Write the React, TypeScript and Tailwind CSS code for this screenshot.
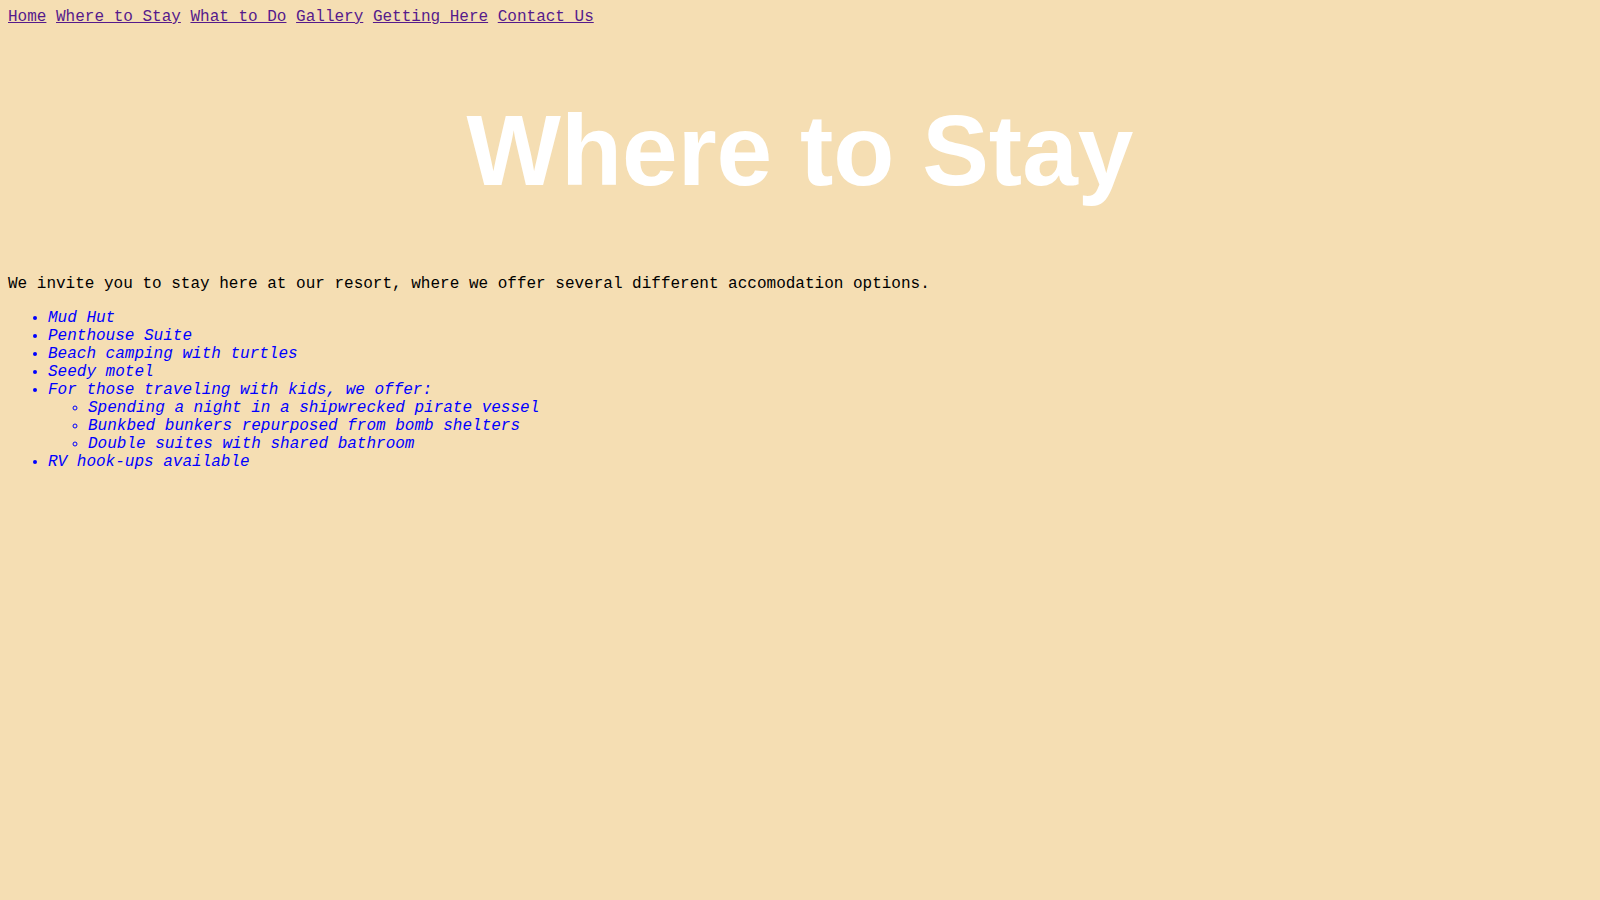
export default function App() {
  const links = ["Home", "Where to Stay", "What to Do", "Gallery", "Getting Here", "Contact Us"];
  return (
    <div
      className="min-h-screen bg-[#f5deb3] p-2 text-[16px] leading-[normal] text-black"
      style={{ fontFamily: '"Liberation Mono", "Courier New", monospace' }}
    >
      <div>
        {links.map((l, i) => (
          <span key={l}>
            <a href="#" className="text-[#551a8b] underline">
              {l}
            </a>
            {i < links.length - 1 ? " " : ""}
          </span>
        ))}
      </div>
      <h1
        className="my-[67px] text-center text-[100px] font-bold leading-[normal] text-white"
        style={{ fontFamily: '"Liberation Sans", Arial, sans-serif' }}
      >
        Where to Stay
      </h1>
      <p className="my-4">
        We invite you to stay here at our resort, where we offer several different accomodation options.
      </p>
      <ul className="my-4 list-disc pl-10 italic text-[#0000ff]">
        <li>Mud Hut</li>
        <li>Penthouse Suite</li>
        <li>Beach camping with turtles</li>
        <li>Seedy motel</li>
        <li>
          For those traveling with kids, we offer:
          <ul className="list-[circle] pl-10">
            <li>Spending a night in a shipwrecked pirate vessel</li>
            <li>Bunkbed bunkers repurposed from bomb shelters</li>
            <li>Double suites with shared bathroom</li>
          </ul>
        </li>
        <li>RV hook-ups available</li>
      </ul>
    </div>
  );
}
